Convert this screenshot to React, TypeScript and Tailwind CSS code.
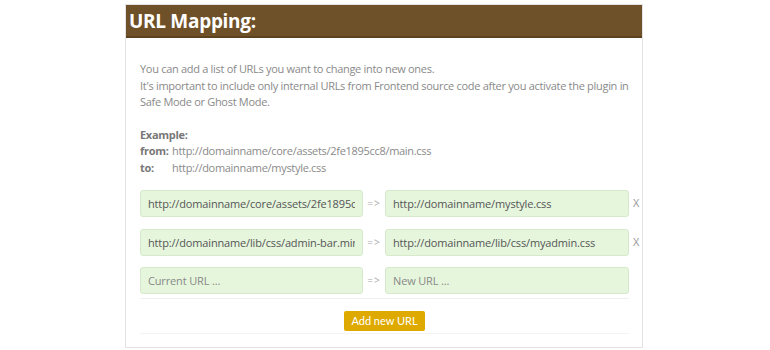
import React from "react";

const rows = [
  { from: "http://domainname/core/assets/2fe1895cc8/main.css", to: "http://domainname/mystyle.css" },
  { from: "http://domainname/lib/css/admin-bar.min.css", to: "http://domainname/lib/css/myadmin.css" },
];

function UrlInput({ value, placeholder }: { value?: string; placeholder?: string }) {
  return (
    <input
      readOnly
      value={value ?? ""}
      placeholder={placeholder}
      className="h-[27px] w-full rounded-[3px] border border-[#d6eacb] bg-[#e6f6dd] px-[7px] text-[11px] tracking-[-0.15px] text-[#555] placeholder:text-[#888] outline-none"
    />
  );
}

function Arrow() {
  return <span className="w-[22px] shrink-0 text-center text-[10px] tracking-[1px] text-[#aaa]">=&gt;</span>;
}

export default function App() {
  return (
    <div className="min-h-[350px] bg-white pt-[4px] font-['Open_Sans',sans-serif]">
      <div className="ml-[125px] w-[518px] border border-[#e3e3e3] bg-white">
        <div className="h-[33px] border-b-2 border-[#5c421f] bg-[#6f5129] px-[3px] pt-[1px]">
          <h2 className="text-[19px] font-bold leading-[30px] tracking-[-0.3px] text-white">URL Mapping:</h2>
        </div>
        <div className="px-[14px] pt-[23px] pb-[13px] text-[11px] leading-[16.5px] tracking-[-0.3px] text-[#8a8a8a]">
          <p className="w-[496px]">
            You can add a list of URLs you want to change into new ones.
            <br />
            It's important to include only internal URLs from Frontend source code after you activate the plugin in Safe Mode or Ghost Mode.
          </p>
          <div className="mt-[16px]">
            <div className="font-bold text-[#777]">Example:</div>
            <div className="flex">
              <span className="w-[32px] shrink-0 font-bold text-[#777]">from:</span>
              <span>http://domainname/core/assets/2fe1895cc8/main.css</span>
            </div>
            <div className="flex">
              <span className="w-[32px] shrink-0 font-bold text-[#777]">to:</span>
              <span>http://domainname/mystyle.css</span>
            </div>
          </div>

          <div className="mt-[14px] flex flex-col gap-[11.5px]">
            {rows.map((r) => (
              <div key={r.from} className="flex items-center">
                <div className="w-[223px] shrink-0">
                  <UrlInput value={r.from} />
                </div>
                <Arrow />
                <div className="w-[244px] shrink-0">
                  <UrlInput value={r.to} />
                </div>
                <span className="ml-[4px] shrink-0 text-[11px] text-[#999]">X</span>
              </div>
            ))}
            <div className="flex items-center">
              <div className="w-[223px] shrink-0">
                <UrlInput placeholder="Current URL ..." />
              </div>
              <Arrow />
              <div className="w-[244px] shrink-0">
                <UrlInput placeholder="New URL ..." />
              </div>
            </div>
          </div>

          <div className="mt-[4px] flex w-[489px] justify-center border-t border-[#f0f0f0] pt-[12px] pb-[2px]">
            <button className="h-[20px] rounded-[2px] bg-[#dfaa00] px-[7px] font-['Lato',sans-serif] text-[11px] leading-[20px] tracking-normal text-white">
              Add new URL
            </button>
          </div>
          <div className="w-[489px] border-t border-[#f3f3f3]" />
        </div>
      </div>
    </div>
  );
}
